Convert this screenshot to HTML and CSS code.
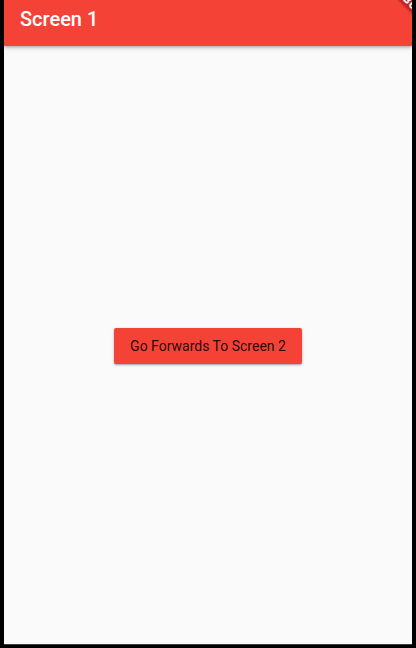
FILE: index.html
```html
<!DOCTYPE html>
<html>
<head>
<meta charset="utf-8">
<link rel="stylesheet" href="styles.css">
</head>
<body>
<div class="device">
  <div class="screen">
    <header class="appbar">
      <h1 class="title">Screen 1</h1>
      <div class="banner"><span>DEBUG</span></div>
    </header>
    <main class="content">
      <button class="raised">Go Forwards To Screen 2</button>
    </main>
  </div>
</div>
</body>
</html>
```
FILE: styles.css
```css
html, body {
  margin: 0;
  padding: 0;
  background: #000;
}
body {
  width: 416px;
  height: 648px;
  overflow: hidden;
  font-family: Roboto, "Noto Sans", sans-serif;
}
.device {
  display: flex;
  padding-left: 4px;
  height: 648px;
  box-sizing: border-box;
}
.screen {
  width: 408px;
  height: 645px;
  background: #fafafa;
  border-bottom: 1px solid #3c3c3c;
  box-sizing: border-box;
  display: flex;
  flex-direction: column;
  position: relative;
  overflow: hidden;
}
.appbar {
  height: 46px;
  flex: none;
  background: #f44336;
  box-shadow: 0 2px 4px rgba(0,0,0,0.22), 0 1px 2px rgba(0,0,0,0.12);
  position: relative;
  z-index: 1;
  overflow: hidden;
  padding: 7px 16px 0;
  box-sizing: border-box;
}
.title {
  margin: 0;
  color: #fff;
  font-size: 20px;
  line-height: 24px;
  font-weight: 500;
}
.banner {
  position: absolute;
  width: 120px;
  height: 12px;
  left: 344px;
  top: -5px;
  transform: rotate(45deg);
  background: rgba(183, 28, 28, 0.75);
  box-shadow: 0 0 3px rgba(0,0,0,0.25);
  color: #fff;
  font-size: 10px;
  font-weight: 900;
  line-height: 12px;
  text-align: center;
  letter-spacing: 1px;
}
.content {
  flex: 1;
  display: flex;
  align-items: center;
  justify-content: center;
  padding-top: 2px;
}
.raised {
  height: 36px;
  padding: 0 16px;
  border: none;
  border-radius: 2px;
  background: #f44336;
  color: rgba(0,0,0,0.87);
  font-family: Roboto, sans-serif;
  font-size: 14px;
  font-weight: 400;
  box-shadow: 0 1px 3px rgba(0,0,0,0.25), 0 1px 1px rgba(0,0,0,0.14);
  cursor: pointer;
}
```
